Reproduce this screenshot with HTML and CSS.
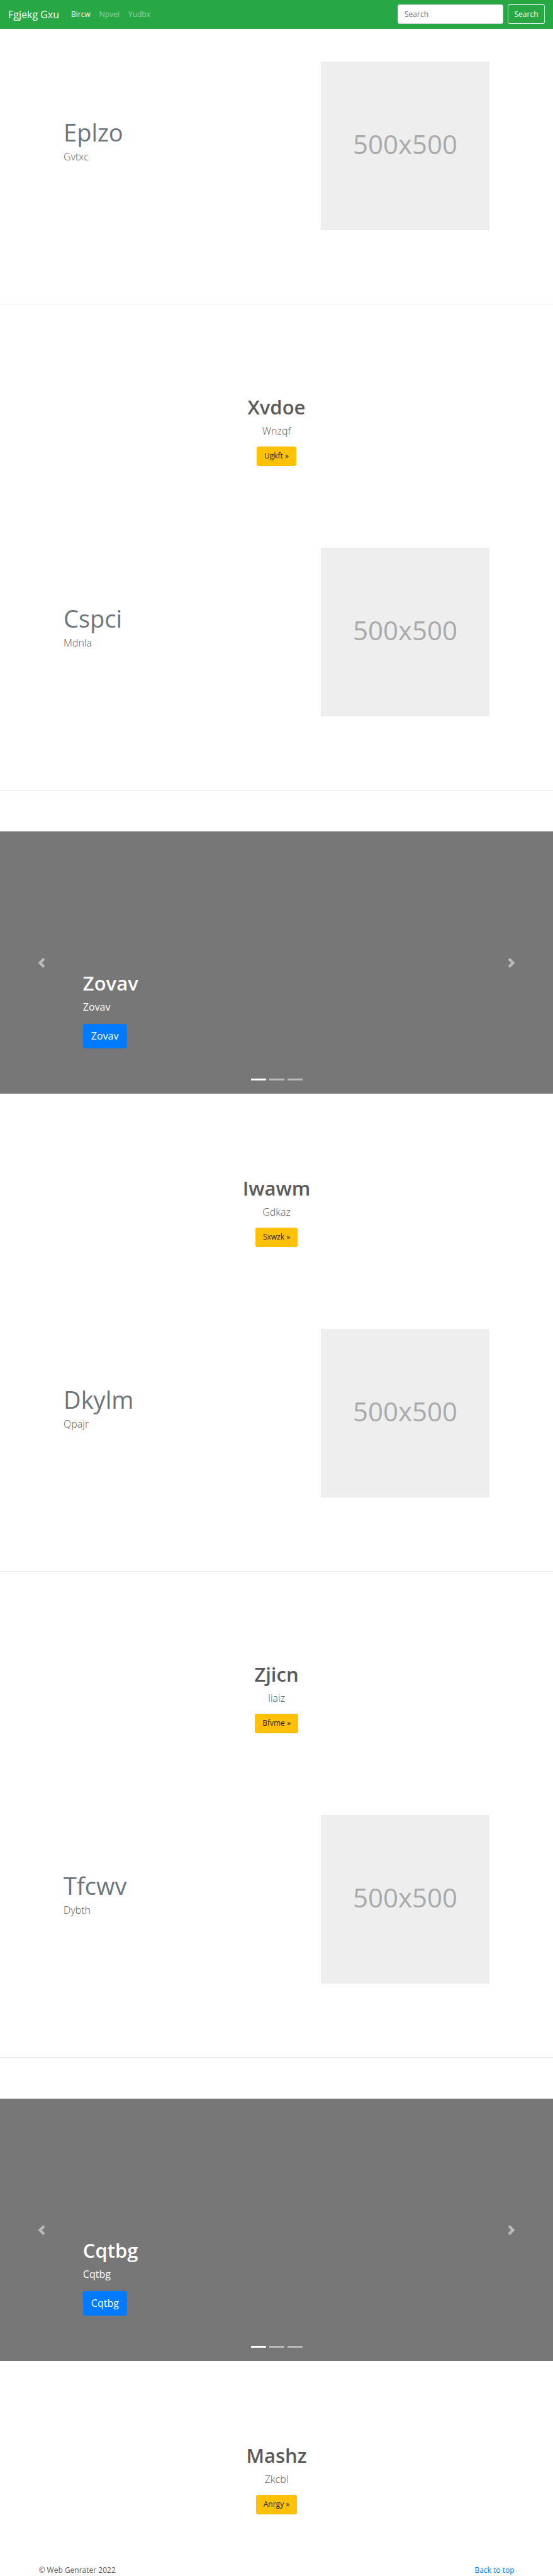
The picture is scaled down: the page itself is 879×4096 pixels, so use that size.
FILE: index.html
```html
<!DOCTYPE html>
<html lang="en">
<head>
<meta charset="utf-8">
<meta name="viewport" content="width=device-width, initial-scale=1">
<title>Fgjekg Gxu</title>
<link rel="stylesheet" href="styles.css">
</head>
<body>
<header class="navbar" id="top">
  <a class="brand" href="#">Fgjekg Gxu</a>
  <nav class="nav-links">
    <a class="nav-link active" href="#">Bircw</a>
    <a class="nav-link" href="#">Npvei</a>
    <a class="nav-link" href="#">Yudbx</a>
  </nav>
  <form class="search">
    <input class="search-input" type="search" placeholder="Search" aria-label="Search">
    <button class="search-button" type="button">Search</button>
  </form>
</header>
<main>
  <section class="featurette">
    <div class="featurette-text">
      <h2 class="featurette-title">Eplzo</h2>
      <p class="lead">Gvtxc</p>
    </div>
    <div class="placeholder">500x500</div>
  </section>
  <hr class="divider">
  <section class="cta">
    <h2 class="title">Xvdoe</h2>
    <p class="lead">Wnzqf</p>
    <a class="button" href="#">Ugkft »</a>
  </section>
  <section class="featurette">
    <div class="featurette-text">
      <h2 class="featurette-title">Cspci</h2>
      <p class="lead">Mdnla</p>
    </div>
    <div class="placeholder">500x500</div>
  </section>
  <hr class="divider">
  <section class="carousel">
    <button class="arrow" type="button" aria-label="Previous"><svg class="arrow-icon" viewBox="0 0 8 8"><path d="M5.25 0l-4 4 4 4 1.5-1.5L4.25 4l2.5-2.5L5.25 0z"/></svg></button>
    <div class="caption">
      <h2 class="title">Zovav</h2>
      <p class="caption-text">Zovav</p>
      <a class="button button-large" href="#">Zovav</a>
    </div>
    <button class="arrow" type="button" aria-label="Next"><svg class="arrow-icon" viewBox="0 0 8 8"><path d="M2.75 0l-1.5 1.5L3.75 4l-2.5 2.5L2.75 8l4-4-4-4z"/></svg></button>
    <div class="indicators">
      <button class="indicator current" type="button" aria-label="Slide 1"></button>
      <button class="indicator" type="button" aria-label="Slide 2"></button>
      <button class="indicator" type="button" aria-label="Slide 3"></button>
    </div>
  </section>
  <section class="cta">
    <h2 class="title">Iwawm</h2>
    <p class="lead">Gdkaz</p>
    <a class="button" href="#">Sxwzk »</a>
  </section>
  <section class="featurette">
    <div class="featurette-text">
      <h2 class="featurette-title">Dkylm</h2>
      <p class="lead">Qpajr</p>
    </div>
    <div class="placeholder">500x500</div>
  </section>
  <hr class="divider">
  <section class="cta">
    <h2 class="title">Zjicn</h2>
    <p class="lead">Iiaiz</p>
    <a class="button" href="#">Bfvme »</a>
  </section>
  <section class="featurette">
    <div class="featurette-text">
      <h2 class="featurette-title">Tfcwv</h2>
      <p class="lead">Dybth</p>
    </div>
    <div class="placeholder">500x500</div>
  </section>
  <hr class="divider">
  <section class="carousel">
    <button class="arrow" type="button" aria-label="Previous"><svg class="arrow-icon" viewBox="0 0 8 8"><path d="M5.25 0l-4 4 4 4 1.5-1.5L4.25 4l2.5-2.5L5.25 0z"/></svg></button>
    <div class="caption">
      <h2 class="title">Cqtbg</h2>
      <p class="caption-text">Cqtbg</p>
      <a class="button button-large" href="#">Cqtbg</a>
    </div>
    <button class="arrow" type="button" aria-label="Next"><svg class="arrow-icon" viewBox="0 0 8 8"><path d="M2.75 0l-1.5 1.5L3.75 4l-2.5 2.5L2.75 8l4-4-4-4z"/></svg></button>
    <div class="indicators">
      <button class="indicator current" type="button" aria-label="Slide 1"></button>
      <button class="indicator" type="button" aria-label="Slide 2"></button>
      <button class="indicator" type="button" aria-label="Slide 3"></button>
    </div>
  </section>
  <section class="cta">
    <h2 class="title">Mashz</h2>
    <p class="lead">Zkcbl</p>
    <a class="button" href="#">Anrgy »</a>
  </section>
</main>
<footer class="footer">
  <span>© Web Genrater 2022</span>
  <a class="footer-link" href="#top">Back to top</a>
</footer>
</body>
</html>
```
FILE: styles.css
```css
* {
  box-sizing: border-box;
}

body {
  margin: 0;
  background: #fff;
  color: #5a5a5a;
  font: 12px/20px "Open Sans", "Noto Sans", sans-serif;
}

h2,
p {
  margin: 0;
}

a {
  text-decoration: none;
}

button,
input {
  font: inherit;
}

.navbar {
  display: flex;
  align-items: center;
  padding: 7px 13px 8px;
  background: #28a745;
}

.brand {
  margin-right: 19px;
  color: #fff;
  font-size: 16px;
  line-height: 24px;
}

.nav-links {
  display: flex;
  gap: 14px;
}

.nav-link {
  color: rgba(255, 255, 255, 0.5);
}

.nav-link.active {
  color: #fff;
}

.search {
  display: flex;
  gap: 7px;
  margin-left: auto;
}

.search-input {
  width: 168px;
  height: 31px;
  padding: 0 10px;
  border: 1px solid #ced4da;
  border-radius: 3px;
  background: #fff;
  color: #495057;
}

.search-input::placeholder {
  color: #6c757d;
  opacity: 1;
}

.search-button {
  height: 31px;
  padding: 0 7px;
  width: 59px;
  border: 1px solid #f8f9fa;
  border-radius: 3px;
  background: transparent;
  color: #f8f9fa;
}

.featurette {
  display: flex;
  justify-content: space-between;
  padding: 52px 11.5% 117px;
}

.featurette-text {
  padding-top: 92px;
}

.featurette-title {
  margin-bottom: 7px;
  color: #6c757d;
  font-size: 38px;
  font-weight: 400;
  line-height: 40px;
}

.lead {
  font-size: 16px;
  font-weight: 300;
  line-height: 24px;
}

.placeholder {
  display: flex;
  align-items: center;
  justify-content: center;
  width: 268px;
  height: 268px;
  padding-bottom: 6px;
  background: #eee;
  color: #aaa;
  font-size: 42px;
  line-height: 48px;
}

.divider {
  margin: 0 0 65px;
  border: 0;
  border-top: 1px solid #e6e6e6;
}

.cta {
  display: flex;
  flex-direction: column;
  align-items: center;
  padding: 79px 13px 78px;
}

.title {
  margin-bottom: 7px;
  font-size: 31px;
  font-weight: 600;
  line-height: 38px;
}

.button {
  margin-top: 13px;
  padding: 5px 12px 6px;
  border-radius: 3px;
  background: #ffc107;
  color: #212529;
}

.carousel {
  display: grid;
  grid-template-columns: 15% 1fr 15%;
  grid-template-rows: 1fr auto;
  height: 417px;
  margin-bottom: 52px;
  background: #777;
  color: #fff;
}

.arrow {
  display: flex;
  grid-row: 1 / 3;
  align-items: center;
  justify-content: center;
  padding: 0;
  border: 0;
  background: none;
  opacity: 0.5;
}

.arrow-icon {
  width: 16px;
  height: 16px;
  fill: #fff;
}

.caption {
  display: flex;
  flex-direction: column;
  align-items: flex-start;
  align-self: end;
  padding-bottom: 48px;
}

.caption-text {
  margin-bottom: 2px;
  font-size: 16px;
  line-height: 24px;
}

.button-large {
  padding: 7px 13px 8px;
  border-radius: 4px;
  background: #007bff;
  color: #fff;
  font-size: 16px;
  line-height: 24px;
}

.indicators {
  display: flex;
  grid-row: 2;
  grid-column: 2;
  gap: 5px;
  justify-content: center;
  padding-bottom: 21px;
}

.indicator {
  width: 24px;
  height: 3px;
  padding: 0;
  border: 0;
  background: #fff;
  opacity: 0.5;
}

.indicator.current {
  opacity: 1;
}

.footer {
  display: flex;
  justify-content: space-between;
  padding: 1px 7% 0;
}

.footer-link {
  color: #007bff;
}
```
